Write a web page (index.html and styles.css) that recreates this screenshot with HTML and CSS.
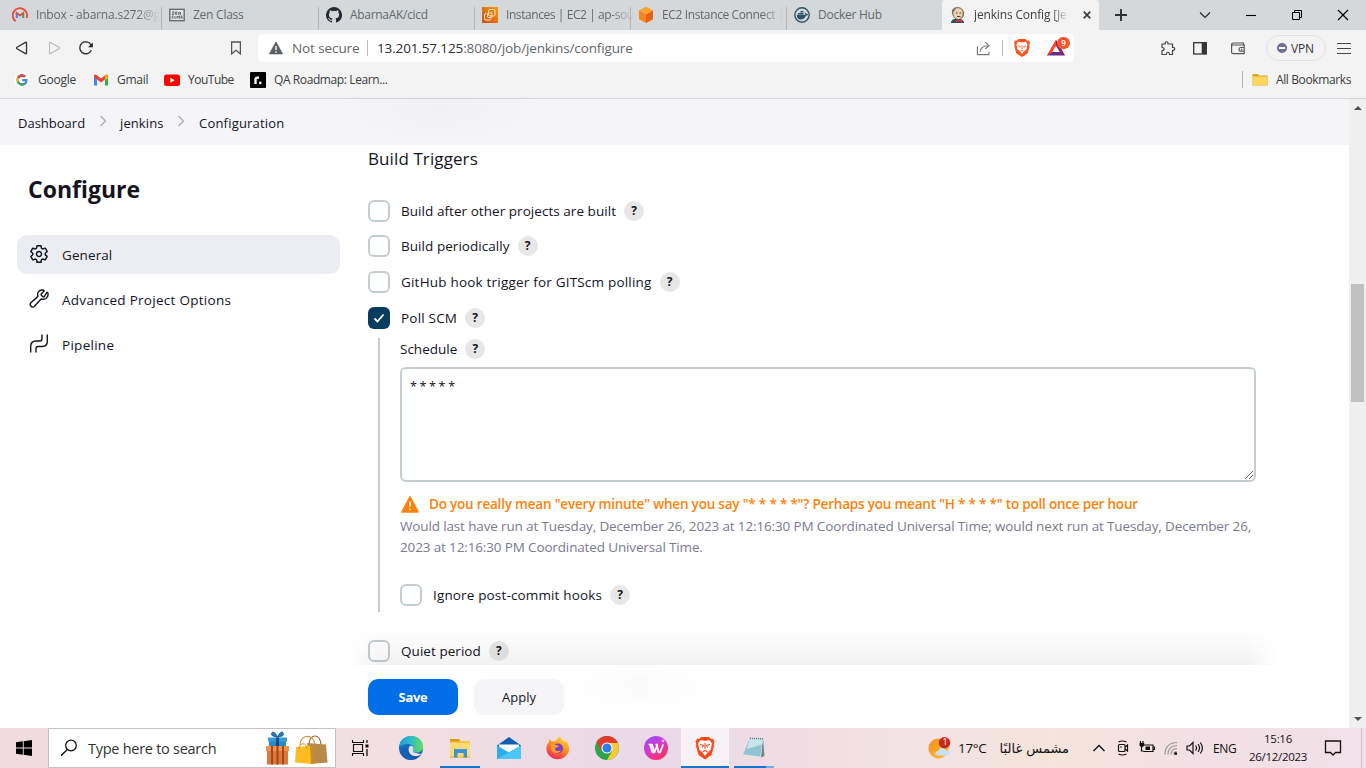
FILE: index.html
```html
<!DOCTYPE html>
<html lang="en">
<head>
<meta charset="utf-8">
<title>jenkins Config [Jenkins]</title>
<link rel="stylesheet" href="styles.css">
</head>
<body>
<div class="screen">

<header class="tabs">
  <div class="tab first">
    <svg class="fav" viewBox="0 0 16 16"><path d="M3.600 14.200A7.200 7.200 0 1 1 14.600 11" fill="none" stroke="#e84335" stroke-width="1.800"/><path d="M4.700 11V6L8 8.500 11.300 6v5" fill="none" stroke="#ea4335" stroke-width="1.700"/><path d="M4.700 6.500V11" stroke="#4285f4" stroke-width="1.700"/><path d="M11.300 6.500V11" stroke="#34a853" stroke-width="1.700"/></svg>
    <span class="tt fade inbox">Inbox - abarna.s272@g</span>
  </div>
  <div class="tab">
    <svg class="fav" viewBox="0 0 16 16"><rect x=".8" y="2.300" width="14.400" height="11.400" fill="#dfe2e3" stroke="#6b6e70" stroke-width="1.400"/><path d="M3 5h2.300L3 7.300h2.300M8.300 5H6.600v2.300h1.700M6.600 6.100h1.500M9.600 7.600V5l1.900 2.600V5M4.600 9H3.200v2.200h1.400M5.800 9v2.200h1M7.600 11.200l.7-2.200.7 2.200M11 9H9.800v1.100H11v1.100H9.800M13.200 9H12v1.100h1.200v1.100H12" fill="none" stroke="#555" stroke-width=".8"/></svg>
    <span class="tt zen">Zen Class</span>
  </div>
  <div class="tab">
    <svg class="fav" viewBox="0 0 16 16"><path fill="#24292f" d="M8 0a8 8 0 0 0-2.530 15.590c.4.07.55-.17.55-.38v-1.490c-2.010.37-2.530-.49-2.690-.94-.09-.23-.48-.94-.82-1.130-.28-.15-.68-.52-.01-.53.63-.01 1.080.58 1.230.82.72 1.210 1.870.87 2.330.66.07-.52.28-.87.51-1.070-1.780-.2-3.640-.89-3.640-3.950 0-.87.31-1.590.82-2.150-.08-.2-.36-1.020.08-2.120 0 0 .67-.21 2.200.82a7.400 7.400 0 0 1 4 0c1.530-1.040 2.200-.82 2.200-.82.44 1.100.16 1.920.08 2.120.51.56.82 1.270.82 2.150 0 3.070-1.870 3.750-3.650 3.950.29.25.54.73.54 1.480v2.200c0 .21.15.46.55.38A8 8 0 0 0 8 0z"/></svg>
    <span class="tt gh">AbarnaAK/cicd</span>
  </div>
  <div class="tab">
    <svg class="fav" viewBox="0 0 16 16"><defs><linearGradient id="aws" x1="0" y1="1" x2="1" y2="0"><stop offset="0" stop-color="#c8511b"/><stop offset="1" stop-color="#f90"/></linearGradient></defs><rect width="16" height="16" fill="url(#aws)"/><g fill="none" stroke="#fbe3cc" stroke-width="1"><rect x="6.500" y="2.500" width="6.500" height="6.500" rx="1.500"/><path d="M4.500 6.500Q2.500 6.500 2.500 8v3.500Q2.500 13 4 13h3.500Q9 13 9 11.500"/><rect x="5.500" y="6" width="4.500" height="4.500" rx="1"/></g></svg>
    <span class="tt fade ec2">Instances | EC2 | ap-sou</span>
  </div>
  <div class="tab">
    <svg class="fav" viewBox="0 0 16 16"><path d="M8 0l7 3.600v8.600L8 16l-7-3.800V3.600z" fill="#f7851f"/><path d="M8 7.500l7-3.900v8.600L8 16z" fill="#e8611b"/><path d="M8 0l7 3.600-7 3.900-7-3.900z" fill="#fda42f"/></svg>
    <span class="tt fade conn">EC2 Instance Connect |</span>
  </div>
  <div class="tab">
    <svg class="fav" viewBox="0 0 16 16"><circle cx="8" cy="8" r="7.200" fill="none" stroke="#2f5268" stroke-width="1.400"/><path d="M2.800 7.800h8.300c.3-.9.100-1.500-.2-2 .9-.2 1.600.5 1.800 1.200.6-.1 1.100.1 1.400.4-.5.9-1.300 1.100-2.100 1.100-.9 2.600-2.800 4-5.500 4-2.300 0-3.800-1.500-3.700-4.700z" fill="#2f5268"/><path d="M4 5.900h5.500v1.500H4zM6.500 4h2.900v1.500H6.500z" fill="#2f5268"/></svg>
    <span class="tt dock">Docker Hub</span>
  </div>
  <div class="tab active">
    <svg class="fav" viewBox="0 0 16 16"><path d="M1 16c0-3 2.500-4 4-4h5c2.500 .5 4 2 4 4z" fill="#2e4a5c"/><path d="M2.500 5.500C2 2.500 4.500.5 7.500.6c4 0 6 2.400 5.600 5.400-.2 3.800-2.100 6.500-4.800 6.500C5.500 12.500 2.800 9.500 2.500 5.500z" fill="#edd0b0" stroke="#4a423e" stroke-width=".8"/><path d="M2.500 7C.5 3 4 0 7.500.5c-2 .5-2 2.500-3.200 3.500zM12 3c2 3 1.500 7-1.500 9 3.500-1 4-5 3.500-7z" fill="#7d746e"/><path d="M6 6h1.500M9.500 6H11M7 9.500h3.500" stroke="#40352f" stroke-width=".9"/><path d="M6 12.500l2.700 1 3.300-1.200v3.200l-3.300-1L6 15.500z" fill="#d33833"/></svg>
    <span class="tt fade jen">jenkins Config [Je</span>
    <svg class="close" viewBox="0 0 8 8"><path d="M.7.7l6.600 6.600M7.300.7L.7 7.300" stroke="#3a3d40" stroke-width="1.700"/></svg>
  </div>
  <svg class="newtab" viewBox="0 0 12 12"><path d="M6 0v12M0 6h12" stroke="#2f3235" stroke-width="1.900"/></svg>
  <div class="winctl">
    <svg viewBox="0 0 12 12"><path d="M1 3.500l5 5 5-5" fill="none" stroke="#222" stroke-width="1.100"/></svg>
    <svg viewBox="0 0 12 12"><path d="M1 6.500h10" stroke="#000" stroke-width="1.100"/></svg>
    <svg viewBox="0 0 12 12"><path d="M1.500 3.500h7v7h-7zM3.500 3.500v-2h7v7h-2" fill="none" stroke="#000"/></svg>
    <svg viewBox="0 0 12 12"><path d="M1 1l10 10M11 1L1 11" stroke="#000" stroke-width="1.200"/></svg>
  </div>
</header>

<nav class="toolbar">
  <svg class="nav" viewBox="0 0 16 16"><path d="M12.500 2.800v10.400q0 1.200-1 .4L3 8.700q-.9-.7 0-1.400L11.500 2.400q1-.6 1 .4z" fill="none" stroke="#333" stroke-width="1.300"/></svg>
  <svg class="nav" viewBox="0 0 16 16"><path d="M3.500 2.800v10.400q0 1.200 1 .4L13 8.700q.9-.7 0-1.400L4.500 2.400q-1-.6-1 .4z" fill="none" stroke="#bbb" stroke-width="1.200"/></svg>
  <svg class="nav" viewBox="0 0 16 16"><path d="M13.300 10.200A6 6 0 1 1 13 4.800" fill="none" stroke="#333" stroke-width="1.400"/><path d="M14.800 2.500v4.700h-4.700z" fill="#222"/></svg>
  <svg class="nav mark" viewBox="0 0 16 16"><path d="M3.600 2h8.800v11.800L8 10.300l-4.400 3.500z" fill="none" stroke="#555" stroke-width="1.300"/></svg>
  <div class="url">
    <svg class="warn" viewBox="0 0 14 14"><path d="M7 .8L13.700 13H.3z" fill="#5b5e62" stroke="#5b5e62" stroke-linejoin="round" stroke-width=".6"/><path d="M7 5v4M7 10.200v1.500" stroke="#fff" stroke-width="1.400"/></svg>
    <span class="ns">Not secure</span>
    <span class="vr"></span>
    <span class="addr"><b>13.201.57.125</b>:8080/job/jenkins/configure</span>
    <svg class="share" viewBox="0 0 16 16"><path d="M1.500 5.500v9h12.300v-3M4.500 11.500c.2-4 3-6.500 8.500-6.500M10 1.500L13.800 5 10 8.500" fill="none" stroke="#777" stroke-width="1.200"/></svg>
    <span class="vr v2"></span>
    <svg class="brave" viewBox="0 0 16 18"><path d="M4.500 0h7l1.700 1.700 2-.2.800 2.500-.7 2 .3 2-2 6.500L8 18l-5.600-3.500L.4 8l.3-2L0 4l.8-2.500 2 .2z" fill="#fb5421"/><path d="M8 3.500l4-.8 1.500 2.800-1 4.800L10 12.500 8 15l-2-2.500-2.500-2.200-1-4.800L4 2.700z" fill="#fff"/><path d="M4 6.800l2.500.9-.7 1M12 6.800l-2.500.9.7 1M8 6v4.500M6.500 12l1.500-.8 1.500.8" stroke="#fb5421" fill="none" stroke-width=".8"/></svg>
    <span class="bat"><svg viewBox="0 0 18 16"><path d="M9 0L0 15.500h18z" fill="#662d91"/><path d="M9 0L0 15.500l9-5z" fill="#ff4724"/><path d="M9 0l9 15.500-9-5z" fill="#9e1f63"/><path d="M9 5.800l3.800 6.200H5.200z" fill="#fff"/></svg><i>9</i></span>
  </div>
  <div class="exts">
    <svg viewBox="0 0 16 16"><path d="M2 4h3.300C4.500 1 8.500 1 8 4h4.500v3.500c3-.8 3 3.300 0 2.800V14.500H9.500c.3-3-3.500-3-3.200 0H2v-3.800c2.800 0 2.800-3.200 0-3.200z" fill="none" stroke="#444" stroke-width="1.200" stroke-linejoin="round"/></svg>
    <svg viewBox="0 0 16 16"><rect x="1.700" y="2.700" width="12.600" height="11.300" fill="none" stroke="#333" stroke-width="1.300"/><path d="M9.700 2.500H14V14H9.700z" fill="#333"/></svg>
    <svg class="wal" viewBox="0 0 16 16"><path d="M13.500 5V3H3.200q-1.600 0-1.600 1.500v7.700q0 1.500 1.600 1.500h11V5H3q-1.400 0-1.400-1M14.200 7.500H10.500q-1.500 0-1.500 1.900 0 1.700 1.500 1.700h3.700M11 9.300h1.200" fill="none" stroke="#555" stroke-width="1.200"/></svg>
    <div class="vpn"><span class="vdot"></span>VPN</div>
    <svg class="menu" viewBox="0 0 16 16"><path d="M1 3.500h14M1 8.500h14M1 13.500h14" stroke="#444" stroke-width="1.200"/></svg>
  </div>
</nav>

<div class="bookmarks">
  <a class="bk"><svg class="round" viewBox="-3 -3 22 22"><path d="M15.500 6.600H8.200v3h4.100c-.4 2-2 3-4.100 3A4.600 4.600 0 0 1 8.200 3.400c1.100 0 2.200.4 3 1.100l2.200-2.200A7.800 7.800 0 1 0 8.200 15.800c4.500 0 8-3.200 7.300-9.200z" fill="#4285f4"/><path d="M1.300 4.400l2.500 2A4.700 4.700 0 0 1 11.200 4.500l2.200-2.200C9.500-1.300 3.600-.4 1.300 4.400z" fill="#ea4335"/><path d="M1.300 4.400a7.800 7.800 0 0 0 0 7.200l2.500-2a4.700 4.700 0 0 1 0-3.200z" fill="#fbbc05"/><path d="M1.300 11.600c2.300 4.500 8 5.500 11.900 2.300l-2.400-1.900c-2.500 1.500-5.900.6-7-2.400z" fill="#34a853"/></svg><span class="g1">Google</span></a>
  <a class="bk"><svg viewBox="0 0 16 16"><path d="M1 13.500V4l3 2v7.500z" fill="#4285f4"/><path d="M15 13.500V4l-3 2v7.500z" fill="#34a853"/><path d="M1 5V3.500q1-1.500 2.500-.5L8 6.500 12.500 3Q14 2 15 3.500V5l-7 5.500z" fill="#ea4335"/><path d="M12 4l1-1q2 0 2 1.500V6l-3 2z" fill="#fbbc05"/></svg><span class="g2">Gmail</span></a>
  <a class="bk"><svg viewBox="0 0 16 16"><rect y="2.500" width="16" height="11.500" rx="2.500" fill="#f00"/><path d="M6.300 5.700v5l4.500-2.500z" fill="#fff"/></svg><span class="g3">YouTube</span></a>
  <a class="bk"><svg viewBox="0 0 16 16"><rect width="16" height="16" rx="1" fill="#000"/><path d="M5.500 12V7.200Q5.500 5.500 9 5.500" fill="none" stroke="#fff" stroke-width="2.400"/><circle cx="10.300" cy="10.900" r="1.300" fill="#fff"/></svg><span class="g4">QA Roadmap: Learn...</span></a>
  <a class="bk all"><svg viewBox="0 0 16 16"><path d="M.5 2h5.500l1 1.500h8q.6 0 .6.700v9.300H.5z" fill="#dca62b"/><path d="M.7 4.500h14.700v8.800H.7z" fill="#ffd65c"/></svg><span class="g5">All Bookmarks</span></a>
</div>

<div class="viewport">
  <div class="page">
    <div class="crumbs">
      <span class="c1">Dashboard</span>
      <svg viewBox="0 0 8 12"><path d="M1.500 1l5 5-5 5" fill="none" stroke="#aaaabd" stroke-width="1.300"/></svg>
      <span class="c2">jenkins</span>
      <svg viewBox="0 0 8 12"><path d="M1.500 1l5 5-5 5" fill="none" stroke="#aaaabd" stroke-width="1.300"/></svg>
      <span class="c3">Configuration</span>
    </div>
    <div class="cols">
      <aside class="side">
        <h1>Configure</h1>
        <a class="item on"><svg viewBox="0 0 512 512"><path d="M262.290 192.310a64 64 0 1 0 57.400 57.400 64.130 64.130 0 0 0-57.400-57.400zM416.390 256a154.340 154.340 0 0 1-1.530 20.790l45.210 35.460a10.810 10.810 0 0 1 2.450 13.750l-42.770 74a10.810 10.810 0 0 1-13.140 4.590l-44.900-18.080a16.110 16.110 0 0 0-15.170 1.750A164.480 164.480 0 0 1 325 400.800a15.940 15.940 0 0 0-8.820 12.140l-6.730 47.890a11.080 11.080 0 0 1-10.680 9.170h-85.540a11.110 11.110 0 0 1-10.690-8.870l-6.720-47.820a16.070 16.070 0 0 0-9-12.220 155.300 155.300 0 0 1-21.460-12.570 16 16 0 0 0-15.110-1.710l-44.890 18.070a10.810 10.810 0 0 1-13.140-4.580l-42.770-74a10.800 10.800 0 0 1 2.450-13.750l38.210-30a16.050 16.050 0 0 0 6-14.080c-.36-4.170-.58-8.330-.58-12.500s.21-8.270.58-12.350a16 16 0 0 0-6.070-13.940l-38.190-30A10.810 10.810 0 0 1 49.480 186l42.770-74a10.810 10.810 0 0 1 13.140-4.590l44.900 18.080a16.110 16.110 0 0 0 15.170-1.750A164.480 164.480 0 0 1 187 111.200a15.940 15.940 0 0 0 8.820-12.140l6.730-47.890A11.080 11.080 0 0 1 213.230 42h85.540a11.110 11.110 0 0 1 10.690 8.870l6.720 47.820a16.070 16.070 0 0 0 9 12.220 155.300 155.300 0 0 1 21.460 12.570 16 16 0 0 0 15.110 1.710l44.890-18.070a10.810 10.810 0 0 1 13.140 4.580l42.770 74a10.800 10.800 0 0 1-2.450 13.750l-38.210 30a16.050 16.050 0 0 0-6.050 14.080c.33 4.140.55 8.300.55 12.470z" fill="none" stroke="#14141f" stroke-width="38" stroke-linejoin="round"/></svg><span class="s1">General</span></a>
        <a class="item"><svg viewBox="0 0 512 512"><path d="M393.870 190a32.100 32.100 0 0 1-45.250 0l-26.570-26.570a32.090 32.090 0 0 1 0-45.260L382.190 58a16 16 0 0 0-4.790-26C324.600 14.500 266 38 238 75c-25 34-18 75-11 105a16 16 0 0 1-4.500 15L48 352c-24 28-24 58 0 84 26 34 66 36 90 8l167-183a16 16 0 0 1 16-5c30 9 78 10 112-14 40-29 66-91 48-147a16 16 0 0 0-27-4z" fill="none" stroke="#14141f" stroke-width="36" stroke-linejoin="round" stroke-linecap="round"/></svg><span class="s2">Advanced Project Options</span></a>
        <a class="item"><svg viewBox="0 0 20 20"><path d="M1.700 18.500v-6Q1.700 7 7 7h3.700Q13 7 13 4.500V.5M7 18.500v-4Q7 12.500 9 12.500h4.500Q18.300 12.500 18.300 7V.5" fill="none" stroke="#14141f" stroke-width="1.400"/></svg><span class="s3">Pipeline</span></a>
      </aside>
      <main class="form">
        <h2>Build Triggers</h2>
        <div class="row"><span class="cb"></span><span class="t1">Build after other projects are built</span><span class="q">?</span></div>
        <div class="row"><span class="cb"></span><span class="t2">Build periodically</span><span class="q">?</span></div>
        <div class="row"><span class="cb"></span><span class="t3">GitHub hook trigger for GITScm polling</span><span class="q">?</span></div>
        <div class="row"><span class="cb checked"><svg viewBox="0 0 22 22"><path d="M6.500 11.500l3 3 6-7" fill="none" stroke="#fff" stroke-width="1.800"/></svg></span><span class="t4">Poll SCM</span><span class="q">?</span></div>
        <div class="nested">
          <div class="sched"><span class="t5">Schedule</span><span class="q">?</span></div>
          <div class="area"><span class="cron">* * * * *</span><svg viewBox="0 0 8 8"><path d="M0 8l8-8M4 8l4-4" stroke="#555" stroke-width=".9"/></svg></div>
          <div class="alert"><svg viewBox="0 0 18 17"><path d="M9 1L17 16H1z" fill="#fe820a" stroke="#fe820a" stroke-width="1.600" stroke-linejoin="round"/><path d="M9 5.500v5.500M9 12.500v2" stroke="#fff" stroke-width="1.500"/></svg><span>Do you really mean "every minute" when you say "* * * * *"? Perhaps you meant "H * * * *" to poll once per hour</span></div>
          <div class="desc"><span class="d1">Would last have run at Tuesday, December 26, 2023 at 12:16:30 PM Coordinated Universal Time; would next run at Tuesday, December 26,</span><br><span class="d2">2023 at 12:16:30 PM Coordinated Universal Time.</span></div>
          <div class="row ign"><span class="cb"></span><span class="t6">Ignore post-commit hooks</span><span class="q">?</span></div>
        </div>
        <div class="row quiet"><span class="cb"></span><span class="t7">Quiet period</span><span class="q">?</span></div>
        <div class="actions"><button class="save">Save</button><button class="apply">Apply</button></div>
      </main>
    </div>
  </div>
  <div class="scroll"><span class="up"></span><span class="thumb"></span><span class="down"></span></div>
</div>

<footer class="task">
  <div class="start"><svg viewBox="0 0 16 16"><path d="M0 2.300l6.800-1v6.300H0zM7.700 1.200L16 0v7.600H7.700zM0 8.500h6.800v6.300l-6.800-1zM7.700 8.500H16V16l-8.300-1.200z" fill="#000"/></svg></div>
  <div class="search">
    <svg class="lens" viewBox="0 0 18 18"><circle cx="11" cy="6.500" r="5.300" fill="none" stroke="#111" stroke-width="1.300"/><path d="M7.300 10.500L1 16.800" stroke="#111" stroke-width="1.400"/></svg>
    <span>Type here to search</span>
    <svg class="gifts" viewBox="0 0 64 34"><path d="M4 10h17v6H4z" fill="#2e8ac4"/><path d="M3 6.500h19v4H3z" fill="#3b9ad6"/><path d="M11 6.500h3V16h-3z" fill="#154d85"/><path d="M12.500 6C8 6 5 4 7 1.500c2-1.500 4 1 5.500 4.500C14 2.500 16 0 18 1.500c2 2.500-1 4.500-5.500 4.500z" fill="#2378b5" stroke="#154d85" stroke-width=".6"/><path d="M2 19h21v14.500H2z" fill="#d9793a"/><path d="M1 15h23v5H1z" fill="#ec9450"/><path d="M6 15h2v18.500H6zM17 15h2v18.500h-2zM11.500 15h2v18.500h-2z" fill="#a6461c"/><path d="M44 14c0-12 12-12 12 0" fill="none" stroke="#9a7438" stroke-width="1.200"/><path d="M42 12l19 1.500 1.500 18L45 33z" fill="#b78a4a"/><path d="M35 14c0-11 14-12 15 0" fill="none" stroke="#c79b4a" stroke-width="1.200"/><path d="M31 16l14-1 2 18-17-1.500z" fill="#fdbb22"/><path d="M45 15l3 2v16h-2z" fill="#d18f12"/><path d="M34 18c0-7 8-7 8 0" fill="none" stroke="#d18f12"/></svg>
  </div>
  <div class="tview"><svg viewBox="0 0 18 16"><path d="M2.500 4.500h9v7h-9zM1 2.500h12M1 13.500h12M1.500 0v2.500M12.500 0v2.500M1.500 13.500V16M12.500 13.500V16" fill="none" stroke="#111" stroke-width="1.100"/><path d="M16 0v3M16 9v7" stroke="#111" stroke-width="1.300"/><path d="M14.500 4.500h3v3h-3z" fill="#111"/></svg></div>
  <div class="apps">
    <div><svg viewBox="0 0 24 24"><defs><linearGradient id="e1" x1="0" x2="1"><stop offset="0" stop-color="#1b9de2"/><stop offset=".55" stop-color="#2fc2c0"/><stop offset="1" stop-color="#6be04b"/></linearGradient><linearGradient id="e2" x1="0" y1="0" x2="0" y2="1"><stop offset="0" stop-color="#1689d4"/><stop offset="1" stop-color="#0c4fa3"/></linearGradient></defs><circle cx="12" cy="12" r="12" fill="url(#e2)"/><path d="M0 11C1 4 6 0 12 0c7 0 12 5 12 10.500 0 4-3 6-6.500 6-3 0-4.500-1.200-3.500-2.500 2-3-1-6-5-6-4 0-7.500 1.500-9 3z" fill="url(#e1)"/><path d="M8.500 12c-2 5 2 10.500 8 10-4 3-9 2-12-1-3-4-2-9 4-9z" fill="#155fb5"/><path d="M14 14.200c1.500-2.500-.4-4.500-2.500-4.500-3 1.500-3 8.500 3.500 10.300 3 .5 6-.5 8-2.500-2 .5-4 .2-5.500-.4-2.500-.2-4-1.200-3.500-2.900z" fill="#f0dde2"/></svg></div>
    <div class="run"><svg viewBox="0 0 24 24"><path d="M2 3h9l2 2h9v17H2z" fill="#f5c64b"/><path d="M2 3h9l1 2.500H2z" fill="#d99a12"/><path d="M2 7h20v13H2z" fill="#ffdc73"/><path d="M6 13h13v8.500h-3.500V17h-6v4.500H6z" fill="#3a93dc"/></svg></div>
    <div><svg viewBox="0 0 24 24"><path d="M0 9.500L12 1l12 8.500V23H0z" fill="#0f5fb5"/><path d="M2 8.500h20V13l-10 4-10-4z" fill="#fff"/><path d="M0 9.500l12 7 12-7V23H0z" fill="#2cace8"/><path d="M24 9.500V23H0z" fill="#4cc6f4"/></svg></div>
    <div><svg viewBox="0 0 24 24"><defs><linearGradient id="ff" x1=".8" y1="0" x2=".3" y2="1"><stop offset="0" stop-color="#ffe23c"/><stop offset=".5" stop-color="#ff8b1b"/><stop offset="1" stop-color="#f22362"/></linearGradient></defs><path d="M3 6V3l3 2.500c1-.5 3-.8 4-.5 1-2 2.500-4 4-5 .5 3 3 3.500 5 6l1.500-1c3 5 3.500 9 1 13-4.500 7-15 7-19.500 0C-.5 14 0 9 3 6z" fill="url(#ff)"/><circle cx="12" cy="12.500" r="5" fill="#7c3fc9"/><path d="M5 9c3-2 5 0 8 1-1 2-4 1-4 3s3 3 6 1c-1 4-9 5-10-1z" fill="#ff9a2a"/></svg></div>
    <div><svg viewBox="0 0 24 24"><circle cx="12" cy="12" r="12" fill="#2fa24c"/><path d="M1.600 6A12 12 0 0 1 22.400 6L22 7.500H12L6.800 15z" fill="#e33b2e"/><path d="M22.700 7A12 12 0 0 1 12 24l5.200-9L14 7z" fill="#fcc934"/><circle cx="12" cy="12" r="5.600" fill="#fff"/><circle cx="12" cy="12" r="4.500" fill="#2f7de9"/></svg></div>
    <div><svg viewBox="0 0 24 24"><defs><linearGradient id="wp" x1="0" y1="0" x2=".6" y2="1"><stop offset="0" stop-color="#8054f8"/><stop offset=".5" stop-color="#d23bd0"/><stop offset="1" stop-color="#fb3065"/></linearGradient></defs><circle cx="12" cy="12" r="12" fill="url(#wp)"/><path d="M4.500 8.500H8l2.500 8 2.500-7 1.500 7H16l3.200-8M6 8.500l2.500 8h2M11.500 8.500H14" fill="none" stroke="#fff" stroke-width="1.700" stroke-linejoin="round"/><path d="M19 3l.5 1.500L21 5l-1.500.5L19 7l-.5-1.500L17 5l1.500-.5z" fill="#fff"/></svg></div>
    <div class="cur"><svg viewBox="-2 0 20 24"><path d="M4 1h8l2 2 2-.2L17.500 6l-.7 2 .2 2-2.500 9L8 23.500 1.500 19-1 10l.2-2-.7-2L0 2.800 2 3z" fill="#fb4a1c"/><path d="M8 5l4.500-1L15 7.500l-1.500 6.500-3 2.500L8 20l-2.500-3.500-3-2.500L1 7.500 3.500 4z" fill="#fff"/><path d="M3 8.300l3.500 1.200-1.200 2M13 8.300L9.500 9.500l1.200 2M8 7v6M5.800 15.800L8 14.500l2.200 1.300" fill="none" stroke="#fb4a1c" stroke-width="1.100"/></svg></div>
    <div class="run two"><svg viewBox="0 0 24 24"><path d="M21 2l1.500 18-3.500 1.500z" fill="#6e8a8e"/><path d="M8 2l13 .5-3 19-17-3z" fill="#8fc4d2"/><path d="M8 2l13 .5-1 6L5 13z" fill="#c7e5ea"/><path d="M1 18.500l17 2V22L1 19.800z" fill="#e8e8dc"/><path d="M8 2.300l13 .5" stroke="#777" stroke-dasharray="1 1" stroke-width="1.500"/></svg></div>
  </div>
  <div class="tray">
    <svg class="wx" viewBox="0 0 24 22"><defs><linearGradient id="sun" x1="0" y1="0" x2="1" y2="1"><stop offset="0" stop-color="#f58a1f"/><stop offset="1" stop-color="#ffc52e"/></linearGradient></defs><circle cx="10.500" cy="11.500" r="10" fill="url(#sun)"/><path d="M10 18.500q-3 0-2.800-2.200Q8 14 10.500 14q1.200-3.500 4.500-3 3 .5 3.500 3 3 0 3.500 2 .2 2.500-2.500 2.500z" fill="#c9e2fa"/><circle cx="16.500" cy="5.700" r="5.700" fill="#c42b1c"/></svg>
    <span class="one">1</span>
    <span class="temp">17°C</span><span class="ar" lang="ar" dir="rtl">مشمس غالبًا</span>
    <svg class="chev" viewBox="0 0 14 14"><path d="M1.500 10L7 4.500l5.500 5.500" fill="none" stroke="#111" stroke-width="1.300"/></svg>
    <svg class="ti" viewBox="0 0 16 16"><rect x="3.500" y="4.500" width="6.500" height="7" rx="1" fill="none" stroke="#111" stroke-width="1.200"/><path d="M10 7l2.500-2v6L10 9M3.500 2q4-2 8 0M3.500 14q4 2 8 0" fill="none" stroke="#111" stroke-width="1.200"/><circle cx="6" cy="7" r=".8" fill="#111"/></svg>
    <svg class="ti" viewBox="0 0 16 16"><path d="M5 5h9v6.500H4.500M14 7h1.500v2.500H14M2.500 7v4h2M1.500 1v2M4 1v2" fill="none" stroke="#111" stroke-width="1.200"/><path d="M.5 3h4.700v2.500L3.800 7H2L.5 5.500zM6.500 6.500H11v3.500H6.500z" fill="#111"/></svg>
    <svg class="ti wifi" viewBox="0 0 16 16"><g fill="none" stroke="#999" stroke-width="1.200"><path d="M2 14.500Q2 3 14 2.500M5 14.500Q5 6 14 5.500M8 14.500Q8 9 14 8.500"/></g><path d="M10.500 14.500q0-3 3.200-3.200" fill="none" stroke="#999"/><circle cx="12.700" cy="13.500" r="1.500" fill="#111"/></svg>
    <svg class="ti vol" viewBox="0 0 18 16"><path d="M1 6h2.500L7 2.500v11L3.500 10H1zM9.500 5.500q2 2.500 0 5M12 4q3 4 0 8M14.300 2.500q4.200 5.500 0 11" fill="none" stroke="#111" stroke-width="1.200"/></svg>
    <span class="eng">ENG</span>
    <span class="clock"><span class="hm">15:16</span><span class="dt">26/12/2023</span></span>
    <svg class="note" viewBox="0 0 18 18"><path d="M1.500 2h15v11.500h-5L9 16l-2.500-2.500h-5z" fill="none" stroke="#111" stroke-width="1.300"/></svg>
    <span class="peek"></span>
  </div>
</footer>
</div>
</body>
</html>
```
FILE: styles.css
```css
* { box-sizing: border-box; }
body { margin: 0; font-family: "Open Sans", "Noto Sans", sans-serif; color: #14141f; background: #fff; }
svg { display: block; flex: none; }
.screen { width: 1366px; height: 768px; display: flex; flex-direction: column; overflow: hidden; }

/* Tab strip */
.tabs { height: 30px; flex: none; display: flex; align-items: center; background: #d4d8db; }
.tab { width: 156px; height: 30px; flex: none; display: flex; align-items: center; gap: 8px; padding: 0 4px 0 7px; background: linear-gradient(#b3b7ba, #b3b7ba) no-repeat right 7px / 1px 23px; }
.tab.first { width: 162px; padding-left: 12px; }
.tab:nth-child(2) { width: 157px; }
.tab:nth-child(6) { background: none; width: 155px; }
.tab.active { width: 157px; background: #f3f3f3; border-radius: 3px 3px 0 0; padding-left: 8px; }
.fav { width: 16px; height: 16px; }
.tt { font-size: 12px; color: #63686b; white-space: nowrap; line-height: 18px; letter-spacing: -.1px; }
.fade { flex: 1; -webkit-mask-image: linear-gradient(90deg, #000 82%, transparent); mask-image: linear-gradient(90deg, #000 82%, transparent); }
.inbox { letter-spacing: -.2px; }
.ec2 { letter-spacing: -.42px; }
.conn { letter-spacing: -.38px; }
.dock, .zen { letter-spacing: -.25px; }
.gh { letter-spacing: -.3px; }
.jen { color: #3c3f42; letter-spacing: -.15px; }
.close { width: 8px; height: 8px; margin: 0 4px 0 6px; }
.newtab { width: 12px; height: 12px; margin-left: 16px; }
.winctl { display: flex; gap: 34px; margin-left: auto; margin-right: 17px; }
.winctl svg { width: 12px; height: 12px; }

/* Toolbar */
.toolbar { height: 36px; flex: none; display: flex; align-items: center; background: #f3f3f3; padding-left: 14px; }
.nav { width: 16px; height: 16px; margin-right: 16px; }
.nav.mark { margin: 0 14px 0 118px; }
.url { width: 816px; height: 28px; background: #fff; border-radius: 4px; display: flex; align-items: center; font-size: 13.5px; color: #63666b; }
.warn { width: 14px; height: 14px; margin: 0 9px 0 11px; }
.ns { width: 67px; white-space: nowrap; letter-spacing: -.1px; }
.vr { width: 1px; height: 16px; background: #b9b9b9; margin: 0 9px 0 8px; }
.addr { letter-spacing: -.13px; }
.addr b { font-weight: 400; color: #2b2d30; }
.share { width: 15px; height: 15px; margin-left: auto; }
.v2 { margin: 0 11px; }
.brave { width: 16px; height: 18px; }
.bat { position: relative; margin: 0 9px 0 17px; }
.bat svg { width: 18px; height: 16px; }
.bat i { position: absolute; left: 10px; top: -3px; width: 13px; height: 12px; border-radius: 6px; background: #fb542b; color: #fff; font: 600 8px/12px "Open Sans", sans-serif; text-align: center; }
.exts { display: flex; align-items: center; margin-left: 86px; gap: 16px; }
.exts svg { width: 16px; height: 16px; }
.exts .wal { margin-left: 6px; }
.vpn { width: 60px; height: 26px; border: 1px solid #dfe0e3; border-radius: 13px; margin-left: 4px; display: flex; align-items: center; gap: 4px; padding-left: 10px; font-size: 12px; color: #33363a; letter-spacing: -.2px; }
.vdot { width: 10px; height: 10px; border-radius: 5px; background: linear-gradient(#fff, #fff) no-repeat center / 6px 2px #6b7094; }
.exts .menu { margin-left: -6px; }

/* Bookmark bar */
.bookmarks { height: 33px; flex: none; display: flex; align-items: center; background: #f3f3f3; border-bottom: 1px solid #d2d4d9; padding: 0 14px 5px; font-size: 12px; color: #3a3c40; white-space: nowrap; }
.bk { display: flex; align-items: center; gap: 8px; margin-right: 16px; letter-spacing: -.25px; }
.bk svg { width: 16px; height: 16px; }
.bk .round { border-radius: 50%; background: #fff; }
.g1 { width: 39px; }
.g2 { width: 31px; }
.g3 { width: 46px; letter-spacing: -.5px; }
.g4 { width: 115px; letter-spacing: -.4px; }
.g5 { letter-spacing: -.38px; }
.all { margin: 0 1px 0 auto; border-left: 1px solid #b5b5b5; padding-left: 9px; }

/* Page */
.viewport { height: 629px; flex: none; display: flex; }
.page { flex: 1; display: flex; flex-direction: column; background: #fff; }
.crumbs { height: 46px; flex: none; background: radial-gradient(ellipse 100px 34px at 440px 10px, #f1f1f4, #f5f5f8); display: flex; align-items: center; padding: 2px 0 0 18px; font-size: 13px; font-weight: 500; white-space: nowrap; }
.crumbs svg { width: 8px; height: 12px; margin-top: -4px; }
.c1 { width: 81px; }
.c2 { width: 70px; padding-left: 13px; letter-spacing: .1px; }
.c3 { padding-left: 14px; letter-spacing: .2px; }
.cols { flex: 1; display: flex; min-height: 0; }
.side { width: 340px; padding: 27px 0 0 17px; }
h1 { margin: 0 0 29px 11px; font-size: 23px; line-height: 34px; font-weight: 700; }
.item { height: 39px; margin-bottom: 6px; display: flex; align-items: center; gap: 13px; padding-left: 12px; border-radius: 10px; font-size: 13.5px; font-weight: 500; }
.item svg { width: 20px; height: 20px; margin-top: -2px; }
.item.on { background: #ecedf3; }
.s1 { letter-spacing: .1px; }
.s2, .s3 { letter-spacing: .28px; }
.form { margin-left: 28px; width: 888px; display: flex; flex-direction: column; }
h2 { margin: 0; height: 48px; flex: none; font-size: 17px; line-height: 28px; font-weight: 500; letter-spacing: .1px; }
.row { height: 35.67px; flex: none; display: flex; align-items: center; font-size: 13.5px; font-weight: 500; }
.cb { width: 22px; height: 22px; border: 2px solid #c3ccd1; border-radius: 6px; background: #fff; margin-right: 11px; flex: none; }
.checked { background: #083c5f; border: 0; }
.q { width: 20px; height: 20px; border-radius: 50%; background: #e7e7e7; font-size: 12px; line-height: 20px; font-weight: 700; text-align: center; margin-left: 8px; }
.t1, .t2, .t7 { letter-spacing: .05px; }
.t3, .t4 { letter-spacing: .2px; }
.t6 { letter-spacing: .15px; }
.nested { height: 274px; flex: none; margin: 2px 0 0 10px; border-left: 2px solid #c3ccd1; padding-left: 20px; }
.sched { height: 22px; display: flex; align-items: center; font-size: 13.5px; font-weight: 500; }
.area { position: relative; height: 115px; margin-top: 7px; border: 2px solid #c3ccd1; border-radius: 6px; padding: 9px 8px; font-size: 12.5px; line-height: 18px; }
.cron { letter-spacing: -.3px; }
.area svg { position: absolute; right: 1px; bottom: 1px; width: 8px; height: 8px; }
.alert { height: 21px; margin-top: 13px; display: flex; align-items: center; gap: 10px; padding-left: 1px; color: #fe820a; font-size: 13.5px; line-height: 20px; font-weight: 600; letter-spacing: -.2px; white-space: nowrap; }
.alert span { margin-top: -2px; }
.alert svg { width: 18px; height: 17px; margin-top: -1px; }
.desc { font-size: 13.5px; line-height: 21px; color: #7a7a90; white-space: nowrap; letter-spacing: -.142px; }
.ign { margin-top: 20px; }
.quiet { height: 28px; margin-top: auto; }
.actions { position: relative; height: 63px; flex: none; display: flex; gap: 16px; padding-top: 14px; background: radial-gradient(ellipse 75px 24px at 270px 22px, #fafafa, #fff); }
.actions::before { content: ""; position: absolute; left: -20px; right: -22px; bottom: 63px; height: 36px; background: linear-gradient(rgba(0,0,0,0), rgba(0,0,0,.052)); -webkit-mask-image: linear-gradient(90deg, transparent, #000 30px, #000 calc(100% - 30px), transparent); mask-image: linear-gradient(90deg, transparent, #000 30px, #000 calc(100% - 30px), transparent); }
button { width: 90px; height: 36px; border: 0; border-radius: 10px; font: 500 13px "Open Sans", sans-serif; color: #14141f; background: #f5f5f8; padding: 0; }
.save { background: #006ee6; color: #fff; font-weight: 700; letter-spacing: -.3px; }
.scroll { width: 17px; background: #f0f0f0; display: flex; flex-direction: column; align-items: center; padding: 7px 0; }
.up { border: 4px solid transparent; border-top: 0; border-bottom: 4px solid #505050; }
.down { border: 4px solid transparent; border-bottom: 0; border-top: 4px solid #505050; margin-top: auto; }
.thumb { width: 13px; height: 118px; background: #c1c1c1; margin-top: 174px; }

/* Taskbar */
.task { height: 40px; flex: none; display: flex; align-items: center; background: linear-gradient(90deg, #f0dbdf 0, #f1dfe2 390px, #ead9e8 660px, #f0dde3 790px, #f2e2e5 920px, #f4e4d9 1050px, #f2e0e6 1200px, #f1e1e8); }
.start { width: 48px; }
.start svg { width: 16px; height: 16px; margin-left: 16px; }
.search { width: 288px; height: 40px; border: 1px solid #c4c0c3; background: #fff; display: flex; align-items: center; padding-left: 11px; font-size: 14.5px; color: #333; white-space: nowrap; }
.lens { width: 18px; height: 18px; margin-right: 10px; }
.search span { width: 177px; letter-spacing: -.27px; }
.gifts { width: 64px; height: 34px; }
.tview { width: 50px; }
.tview svg { width: 18px; height: 16px; margin-left: 15px; }
.apps { display: flex; }
.apps div { width: 49px; height: 40px; display: flex; align-items: center; justify-content: center; }
.apps .run { background: linear-gradient(#0f78d4, #0f78d4) no-repeat center bottom / 40px 2px; }
.apps .two { background: linear-gradient(90deg, #0f78d4 32px, #6fb0e4 32px) no-repeat center bottom / 40px 2px; }
.apps .cur { width: 48px; margin-left: 1px; background: linear-gradient(#0f78d4, #0f78d4) no-repeat center bottom / 100% 2px #f8f2f6; }
.apps svg { width: 24px; height: 24px; }
.tray { margin-left: auto; display: flex; align-items: center; color: #111; position: relative; white-space: nowrap; }
.wx { width: 24px; height: 22px; margin-right: 6px; }
.one { position: absolute; left: 13px; top: 9px; width: 8px; font-size: 9px; line-height: 10px; color: #fff; text-align: center; }
.temp { width: 38px; font-size: 13.5px; letter-spacing: -.3px; }
.ar { width: 73px; font: 13px "DejaVu Sans", sans-serif; }
.chev { width: 14px; height: 14px; margin: 0 9px 0 23px; }
.ti { width: 16px; height: 16px; margin-right: 8px; }
.wifi { margin-right: 7px; }
.vol { width: 18px; margin-right: 9px; }
.eng { width: 24px; font-size: 12px; letter-spacing: -.3px; }
.clock { width: 60px; margin: 0 16px 0 11px; display: flex; flex-direction: column; align-items: center; font-size: 11.5px; line-height: 18px; letter-spacing: -.3px; }
.note { width: 18px; height: 18px; margin-right: 19px; }
.peek { width: 1px; height: 40px; background: #c9bdc3; margin-right: 4px; }
```
